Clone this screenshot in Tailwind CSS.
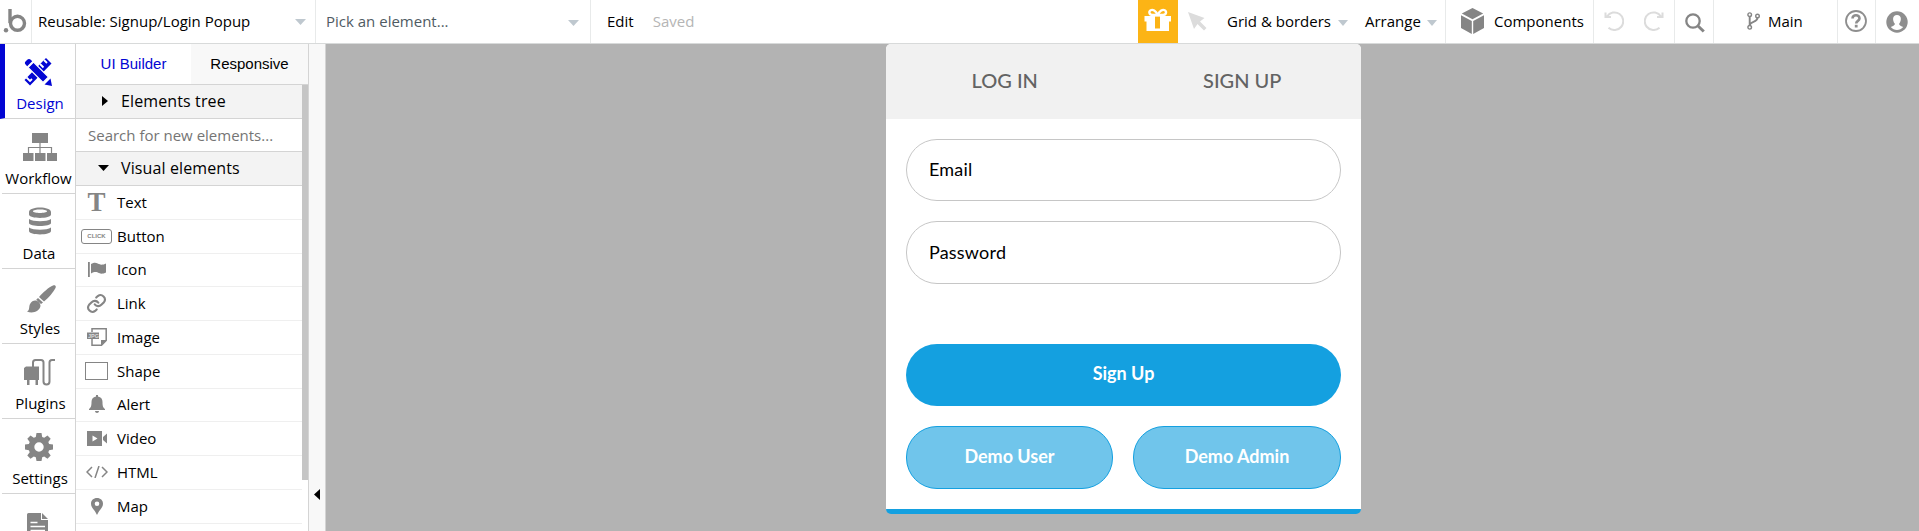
<!DOCTYPE html>
<html lang="en">
<head>
  <meta charset="UTF-8" />
  <meta name="viewport" content="width=device-width, initial-scale=1.0"/>
  <title>Signup/Login Popup</title>
  <script src="https://cdn.jsdelivr.net/npm/@tailwindcss/browser@4"></script>
</head>
<body class="h-screen overflow-hidden flex flex-col bg-white text-black text-[15px] leading-5 font-['Open_Sans',sans-serif]">

  <!-- Top bar -->
  <header class="h-[44px] shrink-0 flex bg-white border-b border-[#d8dada]">
    <div class="w-8 border-r border-[#e8eaea] shrink-0">
      <svg class="w-[31px] h-[43px]" viewBox="0 0 31 43" fill="none" stroke="#858585" stroke-width="3.400">
        <circle cx="17.500" cy="23.300" r="7"/>
        <path d="M10 9v14"/>
        <circle cx="6" cy="30.300" r="2.200" fill="#858585" stroke="none"/>
      </svg>
    </div>
    <div class="w-[284px] shrink-0 flex items-center justify-between pl-[6px] pr-[9px] pb-px border-r border-[#e8eaea]">
      <span>Reusable: Signup/Login Popup</span>
      <svg class="w-[11px] h-[6px] mt-px" viewBox="0 0 11 6"><path d="M0 0h11L5.500 6z" fill="#bfc8cf"/></svg>
    </div>
    <div class="w-[275px] shrink-0 flex items-center justify-between pl-[10px] pr-[11px] pb-px border-r border-[#e8eaea] text-[#4f5b63]">
      <span>Pick an element...</span>
      <svg class="w-[11px] h-[6px] mt-[3px]" viewBox="0 0 11 6"><path d="M0 0h11L5.500 6z" fill="#bfc8cf"/></svg>
    </div>
    <div class="flex items-center grow gap-[19px] pl-[16px] pb-px">
      <span>Edit</span>
      <span class="text-[#b5b5b5]">Saved</span>
    </div>

    <div class="w-10 shrink-0 bg-[#fcb415]">
      <svg class="w-10 h-[43px]" viewBox="0 0 40 43" fill="#fff">
        <path fill-rule="evenodd" d="M6.500 16h26.500v5.500h-2V31H8.500v-9.500h-2zM17 16.500V28.500h5V16.500z"/>
        <path d="M19.700 15c-2-4.500-5-5.800-7-4.800s-2 4.800 2 4.800zM19.700 15c2-4.500 5-5.800 7-4.800s2 4.800-2 4.800z" fill="none" stroke="#fff" stroke-width="2.400"/>
      </svg>
    </div>
    <div class="w-[268px] shrink-0 flex items-center border-r border-[#e8eaea] pb-px">
      <svg class="w-[19px] h-[19px] ml-[10px] mr-5 mt-px" viewBox="0 0 19 19"><path d="M0 0l16.500 6-4.500 3.500 6.500 6.500-2.500 2.500L9.500 12 6 17z" fill="#dcdcdc"/></svg>
      <span class="w-[103px] whitespace-nowrap">Grid &amp; borders</span>
      <svg class="w-[10px] h-[6px] ml-2 mt-[3px]" viewBox="0 0 10 6"><path d="M0 0h10L5 6z" fill="#bfc8cf"/></svg>
      <span class="w-[54px] ml-[17px]">Arrange</span>
      <svg class="w-[10px] h-[6px] ml-[8px] mt-[3px]" viewBox="0 0 10 6"><path d="M0 0h10L5 6z" fill="#bfc8cf"/></svg>
    </div>
    <div class="w-[148px] shrink-0 flex items-center pl-[15px] border-r border-[#e8eaea] gap-[10px] pb-px">
      <svg class="w-[23px] h-[26px]" viewBox="0 0 23 26" fill="#858585">
        <path d="M11.500 0l10.700 5.600-10.700 5.700L.8 5.600zM0 7.200l10.800 5.700V26L0 20zM23 7.200l-10.800 5.700V26L23 20z"/>
      </svg>
      <span>Components</span>
    </div>
    <div class="w-[81px] shrink-0 flex items-center gap-5 pl-[10px] border-r border-[#e8eaea] pb-px">
      <svg class="w-5 h-5" viewBox="0 0 20 20" fill="none" stroke="#dcdcdc" stroke-width="2"><path d="M3 5.500A8.800 8.800 0 1 1 4.500 16.700M1.500 1.500v4.500h5.500"/></svg>
      <svg class="w-5 h-5" viewBox="0 0 20 20" fill="none" stroke="#dcdcdc" stroke-width="2"><path d="M17 5.500A8.800 8.800 0 1 0 15.500 16.700M18.500 1.500v4.500h-5.500"/></svg>
    </div>
    <div class="w-[39px] shrink-0 flex items-center pl-[10px] pt-[3px] border-r border-[#e8eaea]">
      <svg class="w-5 h-5" viewBox="0 0 20 20" fill="none" stroke="#858585"><circle cx="8" cy="8" r="6.700" stroke-width="2.300"/><path d="M12.500 12.500l6.300 6" stroke-width="3"/></svg>
    </div>
    <div class="w-[124px] shrink-0 flex items-center pl-[33px] gap-[8px] border-r border-[#e8eaea] pb-px">
      <svg class="w-[13px] h-[18px]" viewBox="0 0 13 18" fill="none" stroke="#858585" stroke-width="1.400">
        <circle cx="2.700" cy="2.700" r="1.800"/><circle cx="2.700" cy="15.300" r="1.800"/><circle cx="10.500" cy="4" r="1.800"/>
        <path d="M2.700 4.500v9M10.500 5.800c0 5-7.800 3-7.800 7.700" stroke-width="1.900"/>
      </svg>
      <span>Main</span>
    </div>
    <div class="w-[38px] shrink-0 flex items-center pl-[7px] pb-px border-r border-[#e8eaea]">
      <svg class="w-[22px] h-[22px]" viewBox="0 0 22 22" fill="none" stroke="#8e8e8e"><circle cx="11" cy="11" r="10" stroke-width="1.800"/><path d="M7.500 8.500c0-4.300 7-4.300 7 0 0 2.500-3.300 2.300-3.300 5" stroke-width="2.600"/><path d="M11.200 14.800v2.700" stroke-width="2.800"/></svg>
    </div>
    <div class="w-[43px] shrink-0 flex items-center pl-[10px]">
      <svg class="w-[22px] h-[22px]" viewBox="0 0 22 22"><circle cx="11" cy="11" r="10.700" fill="#8e8e8e"/><path d="M11 4c-5 0-4.500 6-2.300 8.500.6 1-.2 1.800-3.900 3.500C8 20 14 20 17.200 16c-3.700-1.700-4.500-2.500-3.900-3.500C15.500 10 16 4 11 4z" fill="#fff"/></svg>
    </div>
  </header>

  <div class="flex grow min-h-0">

    <!-- Main navigation -->
    <nav class="w-[76px] shrink-0 border-r border-[#d4d4d4] flex flex-col overflow-hidden">
      <div class="h-[75px] shrink-0 flex flex-col items-center text-[#0205d3] border-l-[5px] border-b border-b-[#d4d4d4] border-l-[#0205d3] pt-[14px]">
        <svg class="w-7 h-7 -ml-[4px]" viewBox="0 0 28 28" fill="#0205d3">
          <path d="M22 0l5.500 5.500L6 27.500.5 22z"/>
          <path d="M16 6l3.500 3.500M20 2l3 3M2.500 19.500L6 23l2-2" fill="none" stroke="#fff" stroke-width="1.800"/>
          <path d="M4 9.500L9.500 4 24.500 19 19 24.500z" stroke="#fff" stroke-width="1.200"/>
          <path d="M3 2Q5 0 7 2l1.200 1.200-5 5L2 7Q0 5 1.500 3.500zM26.500 20.500L28 28l-7.500-1.500z"/>
        </svg>
        <span class="mt-[7px]">Design</span>
      </div>
      <div class="h-[75px] shrink-0 ml-[2px] flex flex-col items-center border-b border-[#d4d4d4] pt-[14px]">
        <svg class="w-[34px] h-7 ml-[3px]" viewBox="0 0 34 28"><path d="M9 0h16v10H9zM0 20h10.500v8H0zM12 20h10.500v8H12zM24 20h10v8H24z" fill="#858585"/><path d="M17 10v10M5.500 20v-5.500h23V20" fill="none" stroke="#858585" stroke-width="1.200"/></svg>
        <span class="mt-[7px]">Workflow</span>
      </div>
      <div class="h-[75px] shrink-0 ml-[2px] flex flex-col items-center border-b border-[#d4d4d4] pt-[13px]">
        <svg class="w-[22px] h-7 ml-[3px]" viewBox="0 0 22 28" fill="#858585"><path fill-rule="evenodd" d="M0 5c0-6 22-6 22 0v2.500c0 4.500-22 4.500-22 0zM4 4.200c0 2.300 14 2.300 14 0s-14-2.300-14 0z"/><path d="M0 12c4 3 18 3 22 0v4c0 4-22 4-22 0zM0 20.500c4 3 18 3 22 0V24c0 4.500-22 4.500-22 0z"/></svg>
        <span class="mt-[8px] ml-px">Data</span>
      </div>
      <div class="h-[75px] shrink-0 ml-[2px] flex flex-col items-center border-b border-[#d4d4d4] pt-[16px]">
        <svg class="w-[29px] h-7 ml-[5px]" viewBox="0 0 29 28" fill="#858585"><path d="M26 .5c2-1 3.500.5 2.500 2.500-2 4-7 10-11.500 13.500l-5-4.500C16 7.500 22 2 26 .5zM11 13l5 4.500-2 1.500-4.800-4.300zM8 15.500c3 0 5.500 2.500 5.500 5.500-1 5.500-8 8-13.500 5.500 2.500-1 2-4 2.500-6s2.500-5 5.500-5z"/></svg>
        <span class="mt-[5px] ml-[3px]">Styles</span>
      </div>
      <div class="h-[75px] shrink-0 ml-[2px] flex flex-col items-center border-b border-[#d4d4d4] pt-[14px]">
        <svg class="w-8 h-7 ml-[3px]" viewBox="0 0 32 28" fill="none" stroke="#858585" stroke-width="2"><path d="M0 10l2-1.500h13V22h-1v5h-2.500v-5H5.500v5H3v-5H0z" fill="#858585" stroke="none"/><path d="M9 9V4.500Q9 2 11.500 2H17q2.500 0 2.500 2.500V23.500q0 3 3 3t3-3V4.500Q25.500 2 28 2h3"/></svg>
        <span class="mt-[7px] ml-[4px]">Plugins</span>
      </div>
      <div class="h-[75px] shrink-0 ml-[2px] flex flex-col items-center border-b border-[#d4d4d4] pt-[14px]">
        <svg class="w-7 h-7" viewBox="0 0 28 28"><path fill="#858585" fill-rule="evenodd" d="M11.500 0h5l.7 4 2 .8L22.500 2.500 25.700 5.700 23.300 9l.8 2 3.900.6v4.900l-3.900.7-.8 2 2.400 3.300-3.200 3.200-3.300-2.300-2 .8-.7 3.800h-5l-.7-3.800-2-.8-3.300 2.300L2.300 22.500 4.700 19.200l-.8-2L0 16.500v-4.900L3.900 11l.8-2L2.300 5.700 5.500 2.500 8.800 4.800l2-.8zM14 9.300a4.700 4.700 0 1 0 0 9.400 4.700 4.700 0 1 0 0-9.400z"/></svg>
        <span class="mt-[7px] ml-[3px]">Settings</span>
      </div>
      <div class="h-[75px] shrink-0 ml-[2px] flex flex-col items-center pt-[19px]">
        <svg class="w-[21px] h-7 -ml-[2px]" viewBox="0 0 21 28"><path d="M1.500 0H14v7h7v21H0V1.500Q0 0 1.500 0zM15 0l6 6h-6z" fill="#858585"/><path d="M3.500 9.500h7M3.500 13.500h14.500M3.500 17.500h14.500" stroke="#fff" stroke-width="1.600"/></svg>
      </div>
    </nav>

    <!-- Element palette -->
    <aside class="w-[233px] shrink-0 border-r border-[#d4d4d4] flex flex-col overflow-hidden">
      <div class="h-[41px] shrink-0 flex border-b border-[#d4d4d4] font-['Liberation_Sans',Arial,sans-serif]">
        <div class="w-[115px] flex items-center justify-center text-[#0205d3] pb-px">UI Builder</div>
        <div class="grow flex items-center justify-center bg-[#f8f8f8] pb-px">Responsive</div>
      </div>
      <div class="flex grow min-h-0">
        <div class="w-[226px] shrink-0">
          <div class="h-[34px] flex items-center bg-[#f3f3f3] border-b border-[#d4d4d4] pl-[26px] text-base tracking-[0.12px] pb-px">
            <svg class="w-[6px] h-[10px] mr-[13px]" viewBox="0 0 6 10"><path d="M0 0l6 5-6 5z"/></svg>
            <span>Elements tree</span>
          </div>
          <div class="h-[33px] flex items-center border-b border-[#d4d4d4] pl-3 text-[#757575]">Search for new elements...</div>
          <div class="h-[34px] flex items-center bg-[#f3f3f3] border-b border-[#d4d4d4] pl-[22px] text-base tracking-[0.12px] pb-px">
            <svg class="w-[11px] h-[6px] mr-3" viewBox="0 0 11 6"><path d="M0 0h11L5.500 6z"/></svg>
            <span>Visual elements</span>
          </div>

          <div class="h-[33.75px] flex items-center border-b border-[#efefef]">
            <div class="w-[41px] flex justify-center"><span class="font-['Liberation_Serif',serif] font-bold text-[27px] leading-6 text-[#858585]">T</span></div>Text
          </div>
          <div class="h-[33.75px] flex items-center border-b border-[#efefef]">
            <div class="w-[41px] flex justify-center"><span class="w-[31px] h-[15px] border border-[#858585] rounded-[3px] flex items-center justify-center text-[6px] font-bold text-[#858585] font-['Liberation_Sans',sans-serif]">CLICK</span></div>Button
          </div>
          <div class="h-[33.75px] flex items-center border-b border-[#efefef] pb-px">
            <div class="w-[41px] flex justify-center"><svg class="w-[18px] h-[15px]" viewBox="0 0 18 15" fill="#858585"><path d="M0 0h1.800v15H0zM3 2c4-2.500 6-1 8 0s4 1 7-.5v9c-3 1.500-5 1.500-7 .5s-4-2-8 .5z"/></svg></div>Icon
          </div>
          <div class="h-[33.75px] flex items-center border-b border-[#efefef] pb-px">
            <div class="w-[41px] flex justify-center"><svg class="w-[21px] h-[21px]" viewBox="0 0 24 24" fill="none" stroke="#858585" stroke-width="2.400" stroke-linecap="round"><path d="M10 13a5 5 0 0 0 7.500.5l3-3a5 5 0 0 0-7-7l-1.800 1.700M14 11a5 5 0 0 0-7.500-.5l-3 3a5 5 0 0 0 7 7l1.700-1.700"/></svg></div>Link
          </div>
          <div class="h-[33.75px] flex items-center border-b border-[#efefef]">
            <div class="w-[41px] flex justify-center"><svg class="w-5 h-[18px]" viewBox="0 0 20 18"><path d="M5 4V.8h14.200v11.700l-4.700 4.700H5V11" fill="none" stroke="#858585" stroke-width="1.500"/><path d="M14 17.500V12h5.500zM0 4.500h12v6.500H0z" fill="#858585"/><text x="1" y="10" font-size="5.500" font-weight="bold" font-family="Liberation Sans" fill="#ddd">JPG</text></svg></div>Image
          </div>
          <div class="h-[33.75px] flex items-center border-b border-[#efefef]">
            <div class="w-[41px] flex justify-center"><span class="w-[23px] h-[18px] border border-[#858585]"></span></div>Shape
          </div>
          <div class="h-[33.75px] flex items-center border-b border-[#efefef] pb-px">
            <div class="w-[41px] flex justify-center"><svg class="w-4 h-[18px]" viewBox="0 0 16 18" fill="#858585"><path d="M7 0h2v1.500c3 .5 4.500 2.500 4.500 5.500 0 4 .5 5.500 2.500 7v1H0v-1c2-1.500 2.500-3 2.500-7 0-3 1.500-5 4.500-5.500zM6 16h4c0 2.500-4 2.500-4 0z"/></svg></div>Alert
          </div>
          <div class="h-[33.75px] flex items-center border-b border-[#efefef] pb-px">
            <div class="w-[41px] flex justify-center"><svg class="w-5 h-[15px]" viewBox="0 0 20 15" fill="#858585"><path fill-rule="evenodd" d="M0 0h15v15H0zM5.500 4.500v6l5-3zM20 2.500v10l-4-3.500V6z"/></svg></div>Video
          </div>
          <div class="h-[33.75px] flex items-center border-b border-[#efefef]">
            <div class="w-[41px] flex justify-center"><svg class="w-[22px] h-3" viewBox="0 0 22 12" fill="none" stroke="#858585" stroke-width="1.500"><path d="M6 1L1 6l5 5M16 1l5 5-5 5M13 0L9 12"/></svg></div>HTML
          </div>
          <div class="h-[33.75px] flex items-center border-b border-[#efefef]">
            <div class="w-[41px] flex justify-center"><svg class="w-3 h-[17px]" viewBox="0 0 12 17"><path fill="#858585" fill-rule="evenodd" d="M6 0c3.500 0 6 2.300 6 5.700C12 10 8 12 6 17 4 12 0 10 0 5.700 0 2.300 2.500 0 6 0zM6 3.500a2.300 2.300 0 1 0 0 4.600 2.300 2.300 0 1 0 0-4.600z"/></svg></div>Map
          </div>
        </div>
        <div class="grow"><div class="h-[395px] bg-[#c5c5c5]"></div></div>
      </div>
    </aside>

    <!-- Collapse handle -->
    <div class="w-[17px] shrink-0 bg-[#f8f8f8] border-r border-[#d4d4d4] pl-[5px] pt-[445px]">
      <svg class="w-[6px] h-[11px]" viewBox="0 0 6 11"><path d="M6 0v11L0 5.500z"/></svg>
    </div>

    <!-- Canvas -->
    <main class="grow bg-[#b3b3b3] pl-[560px] font-['Lato',sans-serif] text-lg">
      <div class="w-[475px] h-[470px] rounded-[5px] bg-white border-b-[5px] border-[#14a0e0] overflow-hidden">
        <div class="h-[75px] bg-[#f1f1f1] grid grid-cols-2 text-[20px] font-medium text-[#636363] pb-[2px]">
          <div class="flex items-center justify-center">LOG IN</div>
          <div class="flex items-center justify-center">SIGN UP</div>
        </div>
        <div class="p-5 flex flex-col">
          <div class="h-[62px] rounded-[31px] border border-[#c6c6c6] flex items-center pl-[22px] pb-[2px] tracking-[0.2px]">Email</div>
          <div class="h-[63px] mt-5 rounded-[31px] border border-[#c6c6c6] flex items-center pl-[22px] pb-[2px] tracking-[0.2px]">Password</div>
          <button class="h-[62px] mt-[60px] rounded-[31px] bg-[#14a0e0] text-white font-bold pb-1">Sign Up</button>
          <div class="flex gap-5 mt-5 text-white font-bold">
            <button class="w-[207px] h-[63px] rounded-[31px] border border-[#14a0e0] bg-[#70c5eb] pb-1">Demo User</button>
            <button class="w-[208px] h-[63px] rounded-[31px] border border-[#14a0e0] bg-[#70c5eb] pb-1">Demo Admin</button>
          </div>
        </div>
      </div>
    </main>
  </div>
</body>
</html>
